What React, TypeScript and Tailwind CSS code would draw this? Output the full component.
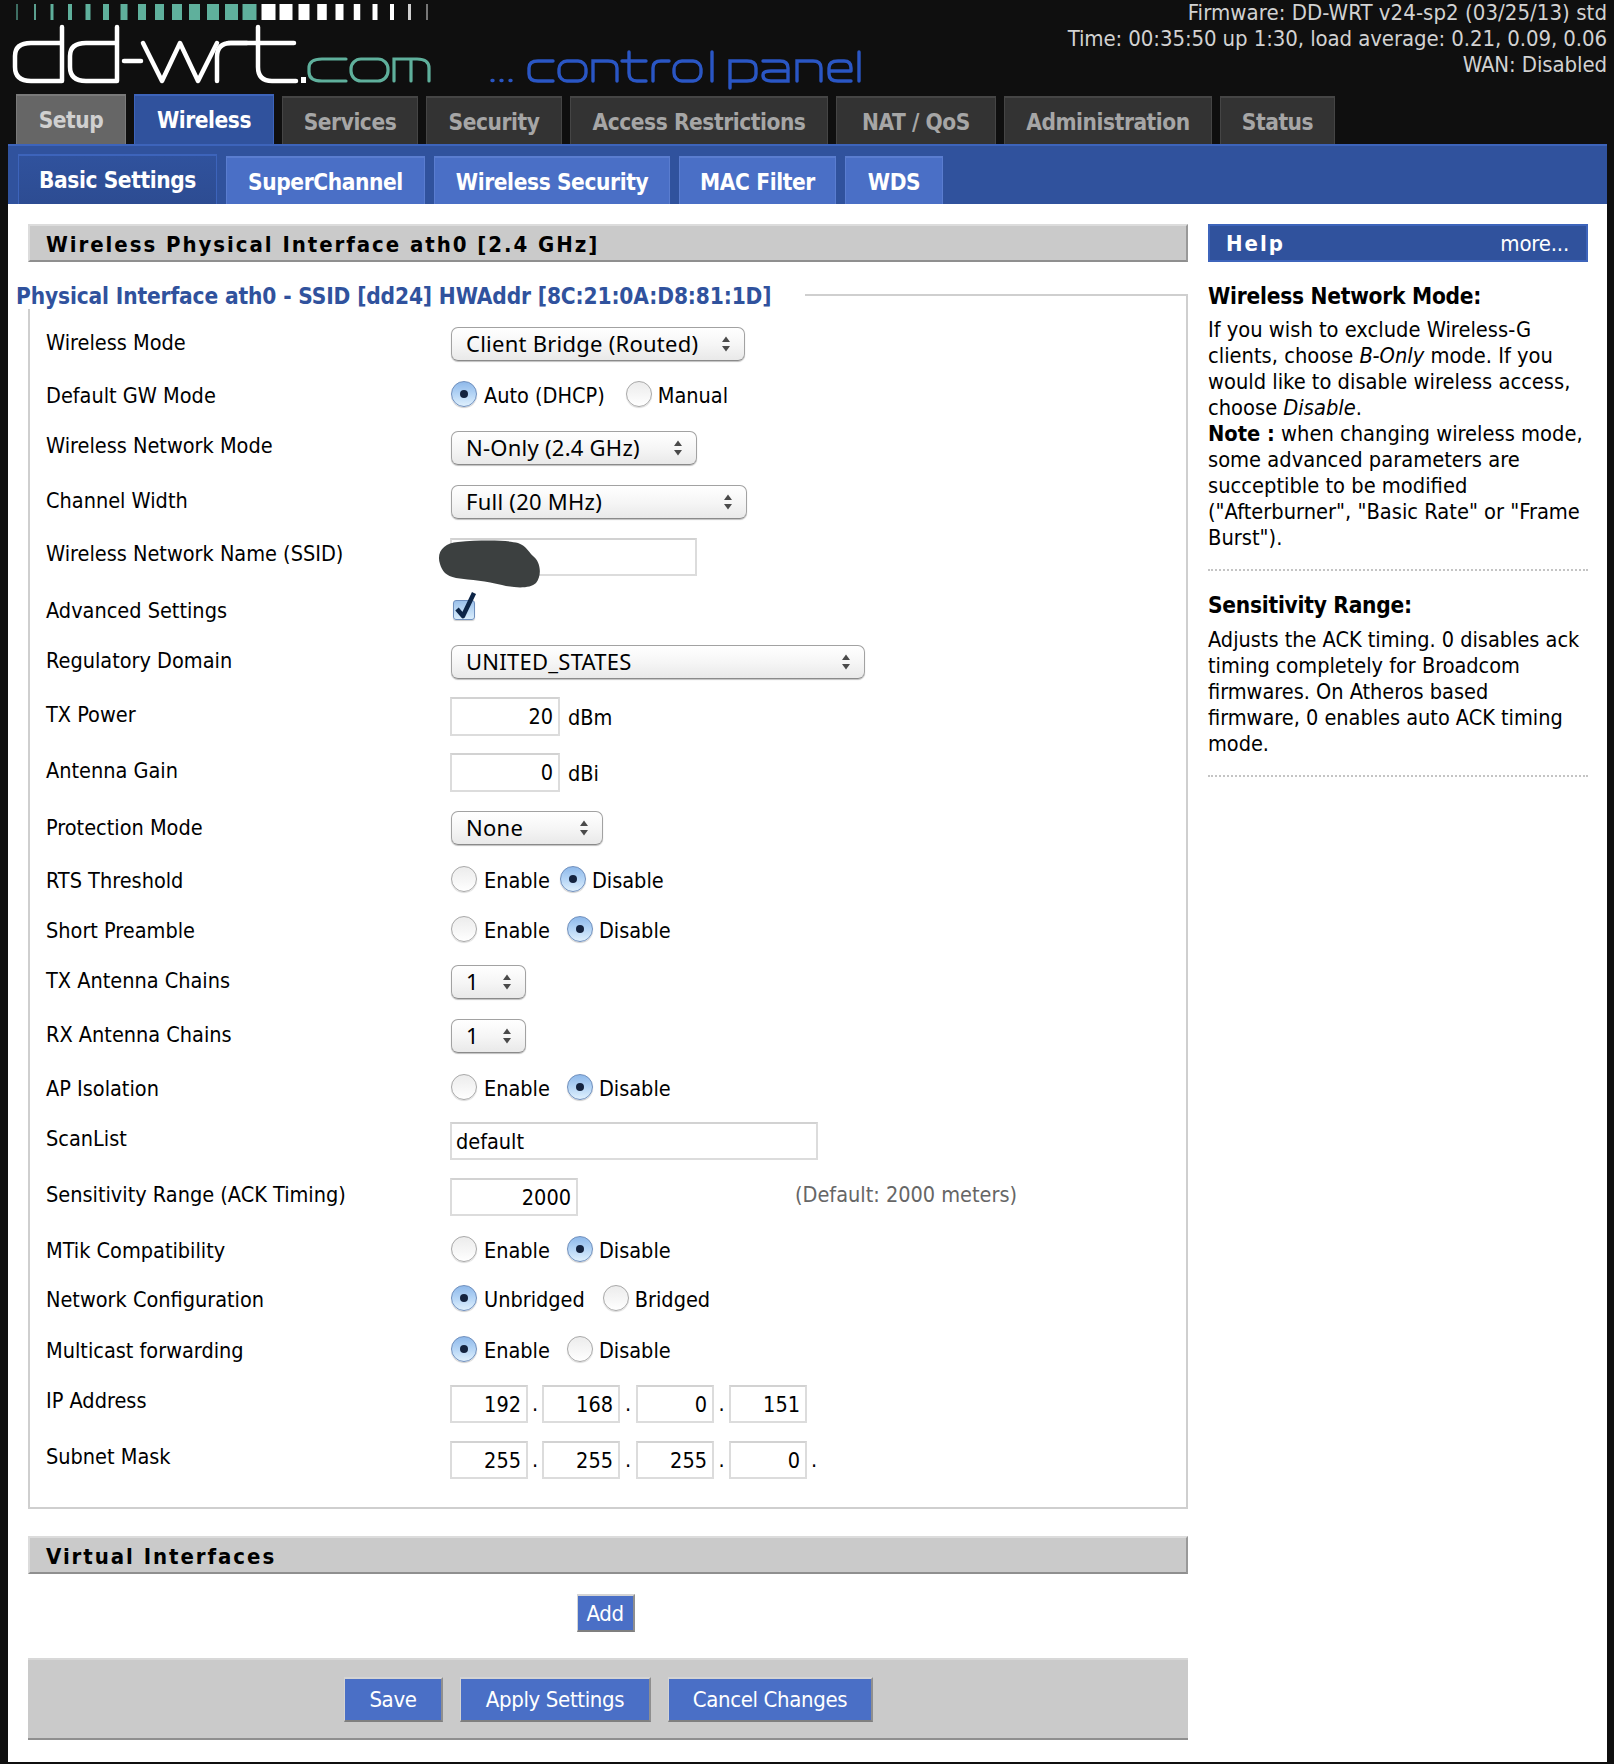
import React from "react";

const bars: [number, number, string][] = [
  [17, 1.5, "#4f8f80"], [35, 2, "#5b9f8f"], [52, 3, "#5fb09c"], [70, 4, "#5fb09c"], [88, 5, "#5fb09c"], [106, 6, "#5fb09c"],
  [124, 7, "#5fb09c"], [142, 8, "#5fb09c"], [159.5, 9, "#5fb09c"], [177, 10, "#5fb09c"], [194.5, 11, "#5fb09c"], [213, 12, "#5fb09c"],
  [231.5, 13, "#5fb09c"], [249.5, 14, "#5fb09c"], [268.5, 14, "#ffffff"], [286, 13, "#ffffff"], [304, 11, "#ffffff"], [322, 9.5, "#ffffff"],
  [339.5, 8, "#ffffff"], [357, 6.5, "#ffffff"], [375, 5, "#ffffff"], [392, 4, "#ffffff"], [409.5, 3, "#cfcfcf"], [427, 2, "#777777"],
];

function Logo() {
  return (
    <svg width="880" height="94" viewBox="0 0 880 94" fill="none" className="shrink-0">
      {bars.map(([x, w, c], i) => (
        <rect key={i} x={x - w / 2} y="4" width={w} height="16" fill={c} />
      ))}
      <g stroke="#ffffff" strokeWidth="4.5" strokeLinecap="round" strokeLinejoin="round">
        <path d="M62 27V81H31Q15 81 15 67V56Q15 43 31 43H62" />
        <path d="M117 27V81H86Q70 81 70 67V56Q70 43 86 43H117" />
        <path d="M124 61H141" />
        <path d="M143 43L162 81L180 43L198 81L217 43" />
        <path d="M217 81V57Q217 43 231 43H247" />
        <path d="M258 27V67Q258 81 272 81H296M228 43H294" />
      </g>
      <rect x="301" y="77" width="5" height="6" fill="#ffffff" />
      <g stroke="#5fb09c" strokeWidth="3.2" strokeLinecap="round">
        <path d="M346 59H322Q309 59 309 68V72Q309 81 322 81H346" />
        <rect x="351" y="59" width="37" height="22" rx="10" />
        <path d="M394 81V59H417Q429 59 429 68V81M411 60V81" />
      </g>
      <g stroke="#2a56c4" strokeWidth="3.4" strokeLinecap="round">
        <path d="M492 80.5H493M501 80.5H502M510 80.5H511" />
        <path d="M553 61H538Q529 61 529 68V74Q529 81 538 81H553" />
        <rect x="559" y="61" width="27" height="20" rx="8" />
        <path d="M593 81V61H608Q617 61 617 68V81" />
        <path d="M629 52V73Q629 81 637 81H646M622 61H646" />
        <path d="M653 81V68Q653 61 661 61H669" />
        <rect x="674" y="61" width="27" height="20" rx="8" />
        <path d="M712 52V81" />
        <path d="M730 88V61H747Q756 61 756 68V74Q756 81 747 81H730" />
        <path d="M763 61H780Q788 61 788 68V81H771Q763 81 763 75Q763 71 771 71H788" />
        <path d="M797 81V61H813Q821 61 821 68V81" />
        <path d="M851 71H829V68Q829 61 838 61H844Q851 61 851 68V71M829 71V74Q829 81 838 81H851" />
        <path d="M859 52V81" />
      </g>
    </svg>
  );
}

function TopTab({ children, cls }: { children: React.ReactNode; cls: string }) {
  return (
    <div className={"flex items-center justify-center border-t-2 border-x font-bold text-[22.5px] tracking-[-0.45px] " + cls}>{children}</div>
  );
}

function SubTab({ children, cls }: { children: React.ReactNode; cls: string }) {
  return (
    <div className={"flex items-center justify-center border-t-2 border-x text-white font-bold text-[22.5px] tracking-[-0.4px] " + cls}>{children}</div>
  );
}

function SectionBar({ children }: { children: React.ReactNode }) {
  return (
    <div className="h-[38px] flex items-center bg-[#cacaca] border-t-2 border-b-2 border-l-2 border-r-2 border-t-[#dcdcdc] border-l-[#dcdcdc] border-r-[#999999] border-b-[#8f8f8f] pl-[16px] pt-[2px] font-bold text-[22px] tracking-[1.95px] text-black">
      {children}
    </div>
  );
}

function Row({ h, label, children }: { h: string; label: string; children?: React.ReactNode }) {
  return (
    <div className={"flex items-start " + h}>
      <div className="w-[421px] shrink-0 pl-[16px] leading-[36px]">{label}</div>
      <div className="flex items-start">{children}</div>
    </div>
  );
}

function Arrows() {
  return (
    <svg width="10" height="16" viewBox="0 0 10 16" className="shrink-0">
      <path d="M5 0.5L9 6H1Z" fill="#4a4a4a" />
      <path d="M5 15.5L9 10H1Z" fill="#4a4a4a" />
    </svg>
  );
}

function Select({ text, cls }: { text: string; cls: string }) {
  return (
    <div className={"h-[34px] flex items-center justify-between pl-[14px] pr-[13px] rounded-[7px] border border-[#a2a2a2] border-b-[#8a8a8a] bg-linear-to-b from-[#ffffff] via-[#f6f6f6] to-[#e9e9e9] shadow-[0_1px_1px_rgba(0,0,0,0.25)] font-['Noto_Sans','DejaVu_Sans',sans-serif] text-[22px] tracking-[0.25px] " + cls}>
      <span className="-mt-[2px]">{text}</span>
      <Arrows />
    </div>
  );
}

function Radio({ on }: { on?: boolean }) {
  return on ? (
    <span className="w-[26px] h-[26px] shrink-0 rounded-full border border-[#6f8fbd] bg-linear-to-b from-[#8fb9ea] via-[#b4d4f5] to-[#dff0fd] flex items-center justify-center shadow-[0_1px_1px_rgba(0,0,0,0.2)]">
      <span className="w-[8px] h-[8px] rounded-full bg-[#14233f]" />
    </span>
  ) : (
    <span className="w-[26px] h-[26px] shrink-0 rounded-full border border-[#a8a8a8] bg-linear-to-b from-[#ececec] via-[#f5f5f5] to-[#ffffff] shadow-[0_1px_1px_rgba(0,0,0,0.15)]" />
  );
}

function Radios({ a, b, first, gap, mt }: { a: string; b: string; first: boolean; gap: string; mt: string }) {
  return (
    <div className={"flex items-center h-[26px] " + mt}>
      <Radio on={first} />
      <span className="ml-[7px] pt-[4px]">{a}</span>
      <span className={gap} />
      <Radio on={!first} />
      <span className="ml-[6px] pt-[4px]">{b}</span>
    </div>
  );
}

const inputCls = "border-2 border-[#dcdcdc] border-t-[#d2d2d2] bg-white outline-none text-black text-[21.5px] font-['DejaVu_Sans_Condensed','DejaVu_Sans',sans-serif] ";

function IpRow({ vals, trailing }: { vals: string[]; trailing?: boolean }) {
  return (
    <div className="flex items-center mt-[2px] -ml-[1px]">
      <input readOnly value={vals[0]} className={inputCls + "w-[78px] h-[38px] text-right pr-[5px]"} />
      <span className="w-[14px] text-center">.</span>
      <input readOnly value={vals[1]} className={inputCls + "w-[78px] h-[38px] text-right pr-[5px]"} />
      <span className="w-[16px] text-center">.</span>
      <input readOnly value={vals[2]} className={inputCls + "w-[78px] h-[38px] text-right pr-[5px]"} />
      <span className="w-[15px] text-center">.</span>
      <input readOnly value={vals[3]} className={inputCls + "w-[78px] h-[38px] text-right pr-[5px]"} />
      {trailing ? <span className="w-[14px] text-center">.</span> : null}
    </div>
  );
}

function Btn({ children, cls }: { children: React.ReactNode; cls: string }) {
  return (
    <div className={"flex items-center justify-center bg-[#4a6fc6] text-white text-[22px] tracking-[-0.35px] border-t-2 border-l border-r-2 border-b-2 border-t-[#d4d4d4] border-l-[#d4d4d4] border-r-[#8f8f8f] border-b-[#7f7f7f] " + cls}>
      {children}
    </div>
  );
}

export default function App() {
  return (
    <div className="w-[1614px] h-[1764px] bg-[#0f0f0f] overflow-hidden font-['DejaVu_Sans_Condensed','DejaVu_Sans',sans-serif] text-[21.5px] text-black">
      <header className="h-[144px] flex flex-col">
        <div className="h-[94px] flex justify-between pr-[7px]">
          <Logo />
          <div className="text-right text-[#d2d2d2] leading-[26px] text-[22px] tracking-[-0.1px]">
            <div className="tracking-[0.05px]">Firmware: DD-WRT v24-sp2 (03/25/13) std</div>
            <div>Time: 00:35:50 up 1:30, load average: 0.21, 0.09, 0.06</div>
            <div>WAN: Disabled</div>
          </div>
        </div>
        <nav className="h-[50px] flex items-end gap-[8px] pl-[16px]">
          <TopTab cls="w-[110px] h-[50px] bg-[#666666] border-[#7a7a7a] text-[#d0d0d0] pt-[2px]">Setup</TopTab>
          <TopTab cls="w-[140px] h-[50px] bg-[#30529d] border-[#3d64bb] text-white pt-[2px]">Wireless</TopTab>
          <TopTab cls="w-[136px] h-[48px] bg-[#333333] border-[#454545] text-[#a6a6a6] pt-[3px]">Services</TopTab>
          <TopTab cls="w-[136px] h-[48px] bg-[#333333] border-[#454545] text-[#a6a6a6] pt-[3px]">Security</TopTab>
          <TopTab cls="w-[258px] h-[48px] bg-[#333333] border-[#454545] text-[#a6a6a6] pt-[3px]">Access Restrictions</TopTab>
          <TopTab cls="w-[160px] h-[48px] bg-[#333333] border-[#454545] text-[#a6a6a6] pt-[3px]">NAT / QoS</TopTab>
          <TopTab cls="w-[208px] h-[48px] bg-[#333333] border-[#454545] text-[#a6a6a6] pt-[3px]">Administration</TopTab>
          <TopTab cls="w-[115px] h-[48px] bg-[#333333] border-[#454545] text-[#a6a6a6] pt-[3px]">Status</TopTab>
        </nav>
      </header>

      <main className="mx-[8px] w-[1599px] h-[1618px] bg-white">
        <div className="h-[60px] bg-[#30529d] border-t-2 border-[#3d64bb] flex items-end gap-[9px] pl-[10px]">
          <SubTab cls="w-[199px] h-[50px] bg-linear-to-b from-[#30529d] to-[#2d4c92] border-[#3d64bb] pt-[2px]">Basic Settings</SubTab>
          <SubTab cls="w-[199px] h-[48px] bg-[#4a6fc6] border-[#5a7dd0] pt-[3px]">SuperChannel</SubTab>
          <SubTab cls="w-[236px] h-[48px] bg-[#4a6fc6] border-[#5a7dd0] pt-[3px]">Wireless Security</SubTab>
          <SubTab cls="w-[157px] h-[48px] bg-[#4a6fc6] border-[#5a7dd0] pt-[3px]">MAC Filter</SubTab>
          <SubTab cls="w-[98px] h-[48px] bg-[#4a6fc6] border-[#5a7dd0] pt-[3px]">WDS</SubTab>
        </div>

        <div className="flex pt-[20px] pl-[20px]">
          <section className="w-[1160px] shrink-0">
            <SectionBar>Wireless Physical Interface ath0 [2.4 GHz]</SectionBar>

            <fieldset className="relative mt-[19px] border-2 border-[#cfcfcf] h-[1228px] min-w-0 p-0 m-0">
              <legend className="-ml-[14px] pr-[34px] h-[28px] leading-[31px] font-bold text-[#30529d] text-[22.5px] tracking-[-0.14px] bg-white">
                Physical Interface ath0 - SSID [dd24] HWAddr [8C:21:0A:D8:81:1D]
              </legend>
              <div className="pt-[16px]">
                <Row h="h-[53px]" label="Wireless Mode">
                  <Select text="Client Bridge (Routed)" cls="w-[294px] mt-[2px]" />
                </Row>
                <Row h="h-[50px]" label="Default GW Mode">
                  <Radios a="Auto (DHCP)" b="Manual" first gap="w-[21px]" mt="mt-[3px]" />
                </Row>
                <Row h="h-[55px]" label="Wireless Network Mode">
                  <Select text="N-Only (2.4 GHz)" cls="w-[246px] mt-[3px]" />
                </Row>
                <Row h="h-[53px]" label="Channel Width">
                  <Select text="Full (20 MHz)" cls="w-[296px] mt-[2px]" />
                </Row>
                <Row h="h-[57px]" label="Wireless Network Name (SSID)">
                  <div className="relative mt-[2px] -ml-[1px]">
                    <input readOnly value="" className={inputCls + "w-[247px] h-[38px]"} />
                    <svg width="110" height="50" viewBox="0 0 110 50" className="absolute -left-[14px] top-[2px]">
                      <path d="M4 24C0 12 8 3 22 2C45 0 70 0 82 3C90 6 92 11 97 16C105 22 106 36 100 43C94 49 78 48 66 45C50 41 36 40 20 38C10 36 6 31 4 24Z" fill="#3c4040" />
                    </svg>
                  </div>
                </Row>
                <Row h="h-[50px]" label="Advanced Settings">
                  <div className="relative ml-[2px] mt-[7px] w-[22px] h-[20px] rounded-[3px] border border-[#6f8fbd] bg-linear-to-b from-[#9cc1ea] to-[#d9edfc] shadow-[0_1px_1px_rgba(0,0,0,0.2)]">
                    <svg width="26" height="30" viewBox="0 0 26 30" className="absolute -left-[1px] -top-[11px]" fill="none">
                      <path d="M4 19L10 26L21 3" stroke="#0d2547" strokeWidth="4.5" strokeLinejoin="round" />
                    </svg>
                  </div>
                </Row>
                <Row h="h-[54px]" label="Regulatory Domain">
                  <Select text="UNITED_STATES" cls="w-[414px] mt-[2px]" />
                </Row>
                <Row h="h-[56px]" label="TX Power">
                  <input readOnly value="20" className={inputCls + "w-[110px] h-[39px] text-right pr-[5px] -ml-[1px]"} />
                  <span className="ml-[8px] leading-[41px]">dBm</span>
                </Row>
                <Row h="h-[57px]" label="Antenna Gain">
                  <input readOnly value="0" className={inputCls + "w-[110px] h-[39px] text-right pr-[5px] -ml-[1px]"} />
                  <span className="ml-[8px] leading-[41px]">dBi</span>
                </Row>
                <Row h="h-[53px]" label="Protection Mode">
                  <Select text="None" cls="w-[152px] mt-[1px]" />
                </Row>
                <Row h="h-[50px]" label="RTS Threshold">
                  <Radios a="Enable" b="Disable" first={false} gap="w-[10px]" mt="mt-[3px]" />
                </Row>
                <Row h="h-[50px]" label="Short Preamble">
                  <Radios a="Enable" b="Disable" first={false} gap="w-[17px]" mt="mt-[3px]" />
                </Row>
                <Row h="h-[54px]" label="TX Antenna Chains">
                  <Select text="1" cls="w-[75px] mt-[2px]" />
                </Row>
                <Row h="h-[54px]" label="RX Antenna Chains">
                  <Select text="1" cls="w-[75px] mt-[2px]" />
                </Row>
                <Row h="h-[50px]" label="AP Isolation">
                  <Radios a="Enable" b="Disable" first={false} gap="w-[17px]" mt="mt-[3px]" />
                </Row>
                <Row h="h-[56px]" label="ScanList">
                  <input readOnly value="default" className={inputCls + "w-[368px] h-[38px] pl-[4px] mt-[1px] -ml-[1px]"} />
                </Row>
                <Row h="h-[56px]" label="Sensitivity Range (ACK Timing)">
                  <input readOnly value="2000" className={inputCls + "w-[128px] h-[38px] text-right pr-[5px] mt-[1px] -ml-[1px]"} />
                  <span className="ml-[217px] leading-[36px] text-[#666666]">(Default: 2000 meters)</span>
                </Row>
                <Row h="h-[49px]" label="MTik Compatibility">
                  <Radios a="Enable" b="Disable" first={false} gap="w-[17px]" mt="mt-[3px]" />
                </Row>
                <Row h="h-[51px]" label="Network Configuration">
                  <Radios a="Unbridged" b="Bridged" first gap="w-[18px]" mt="mt-[3px]" />
                </Row>
                <Row h="h-[50px]" label="Multicast forwarding">
                  <Radios a="Enable" b="Disable" first gap="w-[17px]" mt="mt-[3px]" />
                </Row>
                <Row h="h-[56px]" label="IP Address">
                  <IpRow vals={["192", "168", "0", "151"]} />
                </Row>
                <Row h="h-[67px]" label="Subnet Mask">
                  <IpRow vals={["255", "255", "255", "0"]} trailing />
                </Row>
              </div>
            </fieldset>

            <div className="mt-[27px]">
              <SectionBar>Virtual Interfaces</SectionBar>
            </div>
            <div className="mt-[20px] flex justify-center">
              <Btn cls="w-[58px] h-[38px] ml-[-5px]">Add</Btn>
            </div>
            <div className="mt-[26px] h-[82px] bg-[#cacaca] border-t-2 border-b-2 border-t-[#d8d8d8] border-b-[#8f8f8f] flex items-start justify-start pl-[316px] pt-[17px] gap-[17px]">
              <Btn cls="w-[99px] h-[45px]">Save</Btn>
              <Btn cls="w-[191px] h-[45px]">Apply Settings</Btn>
              <Btn cls="w-[205px] h-[45px]">Cancel Changes</Btn>
            </div>
          </section>

          <aside className="w-[380px] ml-[20px] shrink-0 leading-[26px]">
            <div className="h-[38px] bg-[#30529d] border-2 border-[#3d64bb] flex items-center justify-between pl-[16px] pr-[17px] pt-[2px] text-white">
              <span className="font-bold text-[22px] tracking-[2px]">Help</span>
              <span className="text-[22px] tracking-[-0.2px]">more...</span>
            </div>
            <div className="mt-[21px] font-bold text-[22.5px] tracking-[-0.25px]">Wireless Network Mode:</div>
            <p className="mt-[8px] text-[21.7px] pr-[5px]">
              If you wish to exclude Wireless-G clients, choose <i>B-Only</i> mode. If you would like to disable wireless access, choose <i>Disable</i>.
              <br />
              <b>Note :</b> when changing wireless mode, some advanced parameters are succeptible to be modified ("Afterburner", "Basic Rate" or "Frame Burst").
            </p>
            <div className="mt-[18px] border-b-2 border-dotted border-[#c4c4c4]" />
            <div className="mt-[21px] font-bold text-[22.5px] tracking-[-0.25px]">Sensitivity Range:</div>
            <p className="mt-[9px] pr-[6px]">
              Adjusts the ACK timing. 0 disables ack timing completely for Broadcom firmwares. On Atheros based firmware, 0 enables auto ACK timing mode.
            </p>
            <div className="mt-[18px] border-b-2 border-dotted border-[#c4c4c4]" />
          </aside>
        </div>
      </main>
    </div>
  );
}
